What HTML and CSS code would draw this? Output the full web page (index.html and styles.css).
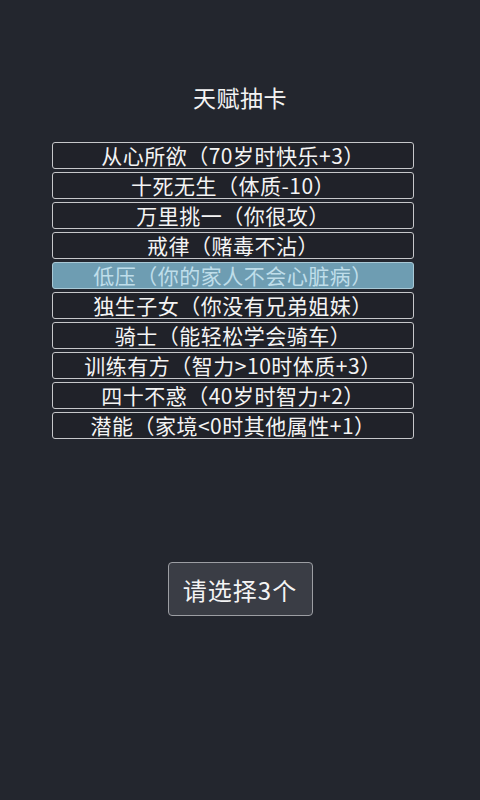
FILE: index.html
```html
<!DOCTYPE html>
<html lang="zh">
<head>
<meta charset="utf-8">
<title>天赋抽卡</title>
<link rel="stylesheet" href="styles.css">
</head>
<body>
<main class="screen">
  <h1 class="title">天赋抽卡</h1>
  <ul class="talents">
    <li class="talent">从心所欲（70岁时快乐+3）</li>
    <li class="talent">十死无生（体质-10）</li>
    <li class="talent">万里挑一（你很攻）</li>
    <li class="talent">戒律（赌毒不沾）</li>
    <li class="talent selected">低压（你的家人不会心脏病）</li>
    <li class="talent">独生子女（你没有兄弟姐妹）</li>
    <li class="talent">骑士（能轻松学会骑车）</li>
    <li class="talent">训练有方（智力&gt;10时体质+3）</li>
    <li class="talent">四十不惑（40岁时智力+2）</li>
    <li class="talent">潜能（家境&lt;0时其他属性+1）</li>
  </ul>
  <div class="actions">
    <button class="choose">请选择3个</button>
  </div>
</main>
</body>
</html>
```
FILE: styles.css
```css
html, body {
  margin: 0;
  padding: 0;
  background: #23262e;
  width: 480px;
  height: 800px;
  overflow: hidden;
}
body {
  font-family: "Noto Sans CJK SC", "Noto Sans", sans-serif;
  color: #f4f4f4;
}
.screen {
  padding-top: 82px;
  display: flex;
  flex-direction: column;
}
.title {
  margin: 0;
  font-size: 23px;
  font-weight: 400;
  line-height: 30px;
  letter-spacing: 0.5px;
  text-align: center;
}
.talents {
  list-style: none;
  margin: 30px 0 0 52px;
  padding: 0;
  width: 362px;
  display: flex;
  flex-direction: column;
  gap: 3px;
}
.talent {
  box-sizing: border-box;
  height: 27px;
  border: 1px solid #c6c7ca;
  border-radius: 3px;
  font-size: 21px;
  line-height: 25px;
  letter-spacing: 0.5px;
  text-align: center;
  white-space: nowrap;
  background: #202229;
}
.talent.selected {
  background: #6e9db2;
  color: #bfdeea;
  border-color: #a9c9d6;
}
.actions {
  margin-top: 123px;
  display: flex;
  justify-content: center;
}
.choose {
  box-sizing: border-box;
  width: 145px;
  height: 54px;
  background: #3a3d45;
  border: 1px solid #9c9ea3;
  border-radius: 4px;
  color: #f4f4f4;
  font-family: "Noto Sans CJK SC", "Noto Sans", sans-serif;
  font-size: 24px;
  letter-spacing: 1px;
  padding: 0;
}
```
